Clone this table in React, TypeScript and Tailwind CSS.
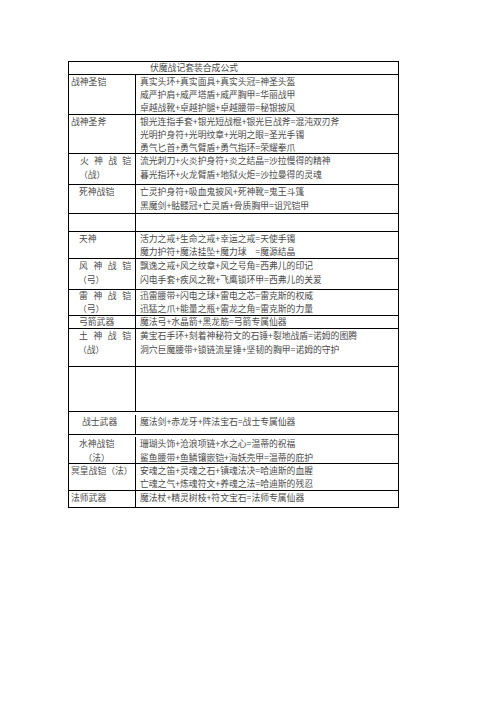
type Row = { name: string[]; spaced?: boolean; pl?: string; pt?: string; lines: string[]; h: string; lh?: string };

const rows: Row[] = [
  { name: ['战神圣铠'], pl: 'pl-[2px]', lines: ['真实头环+真实面具+真实头冠=神圣头盔', '威严护肩+威严塔盾+威严胸甲=华丽战甲', '卓越战靴+卓越护腿+卓越腰带=秘银披风'], h: 'h-[40px]' },
  { name: ['战神圣斧'], pl: 'pl-[2px]', lines: ['银光连指手套+银光短战棍+银光巨战斧=混沌双刃斧', '光明护身符+光明纹章+光明之眼=圣光手镯', '勇气匕首+勇气臂盾+勇气指环=荣耀拳爪'], h: 'h-[39px]' },
  { name: ['火神战铠', '（战）'], spaced: true, pl: 'pl-[11px]', lines: ['流光刺刀+火炎护身符+炎之结晶=沙拉慢得的精神', '暮光指环+火龙臂盾+地狱火炬=沙拉曼得的灵魂'], h: 'h-[31px]', lh: 'leading-[14px]' },
  { name: ['死神战铠'], pl: 'pl-[10px]', lines: ['亡灵护身符+吸血鬼披风+死神靴=鬼王斗篷', '黑魔剑+骷髅冠+亡灵盾+骨质胸甲=诅咒铠甲'], h: 'h-[29px]', lh: 'leading-[14px]' },
  { name: [], lines: [], h: 'h-[18px]' },
  { name: ['天神'], pl: 'pl-[10px]', lines: ['活力之戒+生命之戒+幸运之戒=天使手镯', '魔力护符+魔法挂坠+魔力球　=魔源结晶'], h: 'h-[27px]' },
  { name: ['风神战铠', '（弓）'], spaced: true, pl: 'pl-[10px]', lines: ['飘逸之戒+风之纹章+风之号角=西弗儿的印记', '闪电手套+疾风之靴+飞鹰锁环甲=西弗儿的关爱'], h: 'h-[31px]', lh: 'leading-[14px]' },
  { name: ['雷神战铠', '（弓）'], spaced: true, pl: 'pl-[10px]', lines: ['迅雷腰带+闪电之球+雷电之芯=雷克斯的权威', '迅猛之爪+能量之瓶+雷龙之角=雷克斯的力量'], h: 'h-[26px]', lh: 'leading-[12.5px]' },
  { name: ['弓箭武器'], pl: 'pl-[10px]', lines: ['魔法弓+水晶箭+黑龙筋=弓箭专属仙器'], h: 'h-[13px]', lh: 'leading-[12px]' },
  { name: ['土神战铠', '（战）'], spaced: true, pl: 'pl-[10px]', lines: ['黄宝石手环+刻着神秘符文的石锤+裂地战盾=诺姆的图腾', '洞穴巨魔腰带+锁链流星锤+坚韧的胸甲=诺姆的守护'], h: 'h-[38px]', lh: 'leading-[14px]' },
  { name: [], lines: [], h: 'h-[45px]' },
  { name: ['战士武器'], pl: 'pl-[13px]', pt: 'pt-[3px]', lines: ['魔法剑+赤龙牙+阵法宝石=战士专属仙器'], h: 'h-[23px]' },
  { name: ['水神战铠', '　（法）'], pl: 'pl-[10px]', pt: 'pt-[2px]', lines: ['珊瑚头饰+沧浪项链+水之心=温蒂的祝福', '鲨鱼腰带+鱼鳞镶嵌铠+海妖壳甲=温蒂的庇护'], h: 'h-[29px]', lh: 'leading-[14px]' },
  { name: ['冥皇战铠（法）'], pl: 'pl-[2px]', lines: ['安魂之笛+灵魂之石+镇魂法决=哈迪斯的血腥', '亡魂之气+炼魂符文+养魂之法=哈迪斯的残忍'], h: 'h-[27px]' },
  { name: ['法师武器'], pl: 'pl-[2px]', lines: ['魔法杖+精灵树枝+符文宝石=法师专属仙器'], h: 'h-[17px]' },
];

export default function App() {
  return (
    <div className="w-[496px] h-[702px] bg-white text-[8.8px] leading-[13px] text-[#4a4a4a] font-['Noto_Sans_CJK_SC','Noto_Sans',sans-serif]">
      <div className="h-[61px]" />
      <div className="ml-[68px] w-[331px] border border-black">
        {/* title */}
        <div className="h-[12px] pl-[81px] leading-[12px]">伏魔战记套装合成公式</div>
        {rows.map((r, i) => (
          <div key={i} className={`flex border-t border-black ${r.h} ${r.lh ?? ''} ${r.pt ?? ''}`}>
            <div className={`w-[67px] shrink-0 border-r border-black ${r.pl ?? ''}`}>
              {r.spaced ? (
                <>
                  <div className="flex justify-between pr-[4px]">
                    {r.name[0].split('').map((c, j) => (
                      <span key={j}>{c}</span>
                    ))}
                  </div>
                  <div className="-ml-px">{r.name[1]}</div>
                </>
              ) : (
                r.name.map((n, j) => (
                  <div key={j} className="whitespace-pre">{n}</div>
                ))
              )}
            </div>
            <div className="flex-1 pl-[4px]">
              {r.lines.map((l, j) => (
                <div key={j} className="whitespace-pre">{l}</div>
              ))}
            </div>
          </div>
        ))}
      </div>
    </div>
  );
}
